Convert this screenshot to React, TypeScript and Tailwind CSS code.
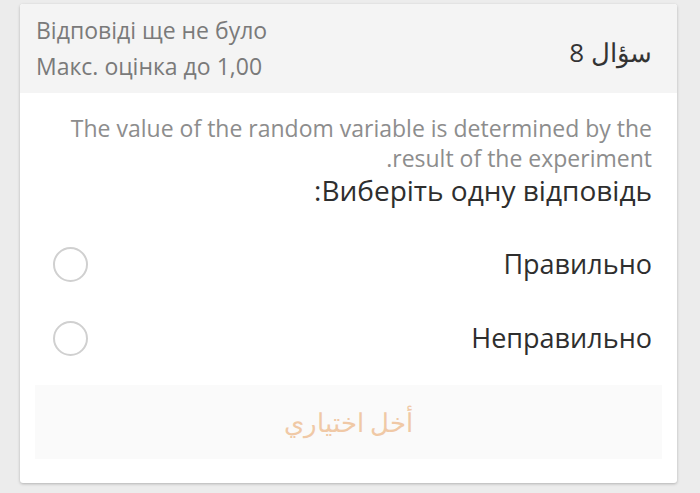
import React from 'react';

const options = ['Правильно', 'Неправильно'];

export default function App() {
  return (
    <div className="min-h-screen w-[700px] h-[493px] bg-[#ececec] pt-[4px] pl-[20px]" style={{ fontFamily: '"Open Sans", "Noto Sans", Arial, sans-serif' }}>
      <div dir="rtl" className="w-[657px] h-[479px] bg-white flex flex-col shadow-[0_1px_3px_rgba(0,0,0,0.25)] rounded-[3px] overflow-hidden">
        {/* header */}
        <div className="h-[89px] bg-[#f4f4f4] flex items-start justify-between pr-[25px] pl-[16px]">
          <div className="text-[26px] leading-[34px] text-[#333] mt-[31px]">سؤال 8</div>
          <div dir="ltr" className="text-left text-[23px] text-[#7a7a7a] leading-[36px] mt-[8px]">
            <div>Відповіді ще не було</div>
            <div>Макс. оцінка до 1,00</div>
          </div>
        </div>

        {/* question */}
        <div className="pr-[25px] pl-[30px] pt-[20px]">
          <p className="text-[23px] leading-[30px] text-[#8d8d8d]">
            The value of the random variable is determined by the result of the experiment.
          </p>
          <p className="text-[28px] leading-[34px] text-[#2e2e2e]">Виберіть одну відповідь:</p>
        </div>

        {/* answers */}
        <div className="flex flex-col pr-[25px] pl-[33px] mt-[40px] gap-[40px]">
          {options.map((o) => (
            <label key={o} className="flex items-center justify-between h-[34px]">
              <span className="text-[27px] text-[#2e2e2e]">{o}</span>
              <span className="w-[35px] h-[35px] rounded-full border-2 border-[#d0d0d0] bg-white" />
            </label>
          ))}
        </div>

        {/* submit */}
        <div className="mx-[15px] mt-[30px] h-[74px] bg-[#fafafa] flex items-center justify-center">
          <span className="text-[26px] text-[#f0c9a6]">أخل اختياري</span>
        </div>
      </div>
    </div>
  );
}
